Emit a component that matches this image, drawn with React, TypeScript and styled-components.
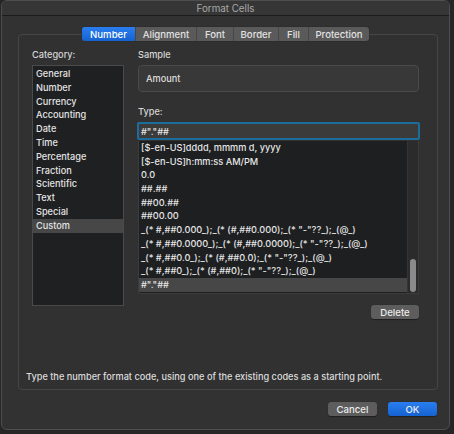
import React from "react";
import styled, { createGlobalStyle } from "styled-components";

const Global = createGlobalStyle`
  html, body { margin: 0; padding: 0; background: #262626; }
  body { font-family: Inter, "Noto Sans", "Liberation Sans", sans-serif; -webkit-font-smoothing: antialiased; }
  * { box-sizing: border-box; }
`;

const Window = styled.div`
  margin-left: 1px;
  width: 449px;
  height: 430px;
  background: #323232;
  border: 1px solid #4e4e4e;
  border-radius: 6px;
  overflow: hidden;
  display: flex;
  flex-direction: column;
  color: #dcdcdc;
  font-size: 9.2px;
  font-weight: 500;
`;

const TitleBar = styled.div`
  height: 15px;
  flex: none;
  background: #363636;
  border-bottom: 1px solid #1c1c1c;
  display: flex;
  align-items: center;
  justify-content: center;
  color: #a9a9a9;
  font-size: 9.8px;
  font-weight: 400;
  line-height: 14px;
  padding-top: 2px;
`;

const Body = styled.div`
  flex: 1;
  display: flex;
  flex-direction: column;
  padding: 11px 11px 0 16px;
`;

const Tabs = styled.div`
  align-self: center;
  margin-left: -5px;
  display: flex;
  height: 14px;
  border-radius: 3px;
  overflow: hidden;
  background: #5a5a5a;
  position: relative;
  z-index: 1;
  margin-bottom: -7px;
  box-shadow: 0 0 0 0.5px #2a2a2a;
`;

const Tab = styled.div<{ $active?: boolean; $w: number }>`
  width: ${(p) => p.$w}px;
  display: flex;
  align-items: center;
  justify-content: center;
  font-size: 9.6px;
  color: ${(p) => (p.$active ? "#ffffff" : "#e2e2e2")};
  background: ${(p) => (p.$active ? "linear-gradient(#2a7ef0, #1562d0)" : "transparent")};
  border-left: ${(p) => (p.$active ? "none" : "1px solid #474747")};
  &:first-child { border-left: none; }
`;

const Panel = styled.div`
  height: 356px;
  width: 420px;
  border: 1px solid #464646;
  border-radius: 4px;
  background: #313131;
  display: flex;
  flex-direction: column;
  padding: 13px 18px 0 13px;
`;

const Columns = styled.div`
  display: flex;
  gap: 14px;
`;

const LeftCol = styled.div`
  width: 92px;
  display: flex;
  flex-direction: column;
`;

const RightCol = styled.div`
  flex: 1;
  display: flex;
  flex-direction: column;
`;

const Label = styled.div<{ $mt?: number }>`
  line-height: 13px;
  color: #d6d6d6;
  margin-top: ${(p) => p.$mt ?? 0}px;
  margin-bottom: 4px;
`;

const CategoryList = styled.div`
  height: 241px;
  background: #1f2022;
  border: 1px solid #4a4a4a;
  padding-top: 1px;
  display: flex;
  flex-direction: column;
`;

const CategoryItem = styled.div<{ $selected?: boolean }>`
  height: 13.8px;
  line-height: 13.8px;
  padding-left: 3px;
  color: #e4e4e4;
  background: ${(p) => (p.$selected ? "#474747" : "transparent")};
`;

const SampleBox = styled.div`
  height: 27px;
  border: 1px solid #4a4a4a;
  border-radius: 4px;
  background: #383838;
  display: flex;
  align-items: center;
  padding-left: 7px;
  color: #dedede;
`;

const TypeInput = styled.div`
  height: 18px;
  margin-left: -1px;
  margin-right: -1px;
  border: 2px solid #1c6d9c;
  border-radius: 2px;
  background: #3b3b3b;
  display: flex;
  align-items: center;
  padding-left: 2px;
  color: #e8e8e8;
`;

const CodeListWrap = styled.div`
  height: 153px;
  margin-top: 1px;
  display: flex;
  background: #1e1f21;
  border: 1px solid #3c3c3c;
  border-top: none;
`;

const CodeList = styled.div`
  flex: 1;
  overflow: hidden;
  display: flex;
  flex-direction: column;
`;

const CodeItem = styled.div<{ $selected?: boolean }>`
  flex: none;
  height: 13.7px;
  line-height: 13.7px;
  padding-left: 2px;
  white-space: nowrap;
  color: #e6e6e6;
  background: ${(p) => (p.$selected ? "#474747" : "transparent")};
`;

const ScrollTrack = styled.div`
  width: 11px;
  background: #2b2b2b;
  border-left: 1px solid #353535;
  position: relative;
`;

const ScrollThumb = styled.div`
  position: absolute;
  left: 2px;
  width: 6px;
  bottom: 1px;
  height: 33px;
  border-radius: 3px;
  background: #8a8a8a;
`;

const ButtonRow = styled.div<{ $mt: number }>`
  display: flex;
  justify-content: flex-end;
  gap: 11px;
  margin-top: ${(p) => p.$mt}px;
`;

const Button = styled.div<{ $primary?: boolean; $w: number }>`
  width: ${(p) => p.$w}px;
  height: 14px;
  border-radius: 3px;
  display: flex;
  align-items: center;
  justify-content: center;
  font-size: 9.6px;
  color: #ececec;
  background: ${(p) => (p.$primary ? "linear-gradient(#2a7ef0, #1562d0)" : "#5d5d5d")};
  box-shadow: 0 0.5px 1px rgba(0, 0, 0, 0.4);
`;

const Hint = styled.div`
  margin-top: auto;
  margin-left: -6px;
  padding-bottom: 6px;
  line-height: 13px;
  color: #dcdcdc;
  white-space: nowrap;
`;

const Footer = styled.div`
  display: flex;
  justify-content: flex-end;
  gap: 11px;
  padding-top: 12px;
  padding-right: 1px;
`;

const categories = [
  "General",
  "Number",
  "Currency",
  "Accounting",
  "Date",
  "Time",
  "Percentage",
  "Fraction",
  "Scientific",
  "Text",
  "Special",
  "Custom",
];

const codes = [
  "[$-en-US]dddd, mmmm d, yyyy",
  "[$-en-US]h:mm:ss AM/PM",
  "0.0",
  "##.##",
  "##00.##",
  "##00.00",
  '_(* #,##0.000_);_(* (#,##0.000);_(* "-"??_);_(@_)',
  '_(* #,##0.0000_);_(* (#,##0.0000);_(* "-"??_);_(@_)',
  '_(* #,##0.0_);_(* (#,##0.0);_(* "-"??_);_(@_)',
  '_(* #,##0_);_(* (#,##0);_(* "-"??_);_(@_)',
  '#"."##',
];

const tabs: [string, number][] = [
  ["Number", 53],
  ["Alignment", 61],
  ["Font", 37],
  ["Border", 45],
  ["Fill", 30],
  ["Protection", 61],
];

export default function App() {
  return (
    <>
      <Global />
      <Window>
        <TitleBar>Format Cells</TitleBar>
        <Body>
          <Tabs>
            {tabs.map(([t, w], i) => (
              <Tab key={t} $w={w} $active={i === 0}>
                {t}
              </Tab>
            ))}
          </Tabs>
          <Panel>
            <Columns>
              <LeftCol>
                <Label>Category:</Label>
                <CategoryList>
                  {categories.map((c) => (
                    <CategoryItem key={c} $selected={c === "Custom"}>
                      {c}
                    </CategoryItem>
                  ))}
                </CategoryList>
              </LeftCol>
              <RightCol>
                <Label>Sample</Label>
                <SampleBox>Amount</SampleBox>
                <Label $mt={13}>Type:</Label>
                <TypeInput>#"."##</TypeInput>
                <CodeListWrap>
                  <CodeList>
                    {codes.map((c, i) => (
                      <CodeItem key={i} $selected={i === codes.length - 1}>
                        {c}
                      </CodeItem>
                    ))}
                  </CodeList>
                  <ScrollTrack>
                    <ScrollThumb />
                  </ScrollTrack>
                </CodeListWrap>
                <ButtonRow $mt={11}>
                  <Button $w={48}>Delete</Button>
                </ButtonRow>
              </RightCol>
            </Columns>
            <Hint>Type the number format code, using one of the existing codes as a starting point.</Hint>
          </Panel>
          <Footer>
            <Button $w={49}>Cancel</Button>
            <Button $w={49} $primary>
              OK
            </Button>
          </Footer>
        </Body>
      </Window>
    </>
  );
}
